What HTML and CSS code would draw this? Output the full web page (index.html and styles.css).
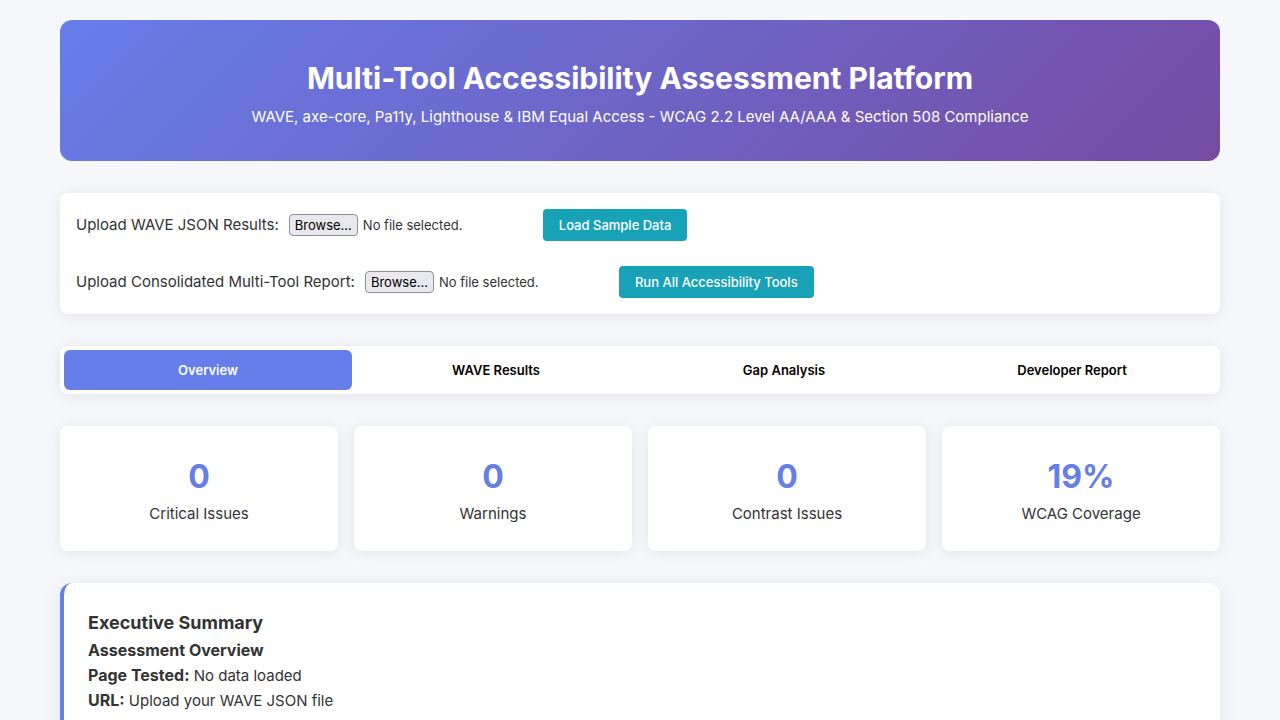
FILE: index.html
```html
<!DOCTYPE html>
<html lang="en">
<head>
<meta charset="utf-8">
<title>Multi-Tool Accessibility Assessment Platform</title>
<link rel="stylesheet" href="styles.css">
</head>
<body>
<div class="container">
  <header class="header">
    <h1 class="title">Multi-Tool Accessibility Assessment Platform</h1>
    <p class="subtitle">WAVE, axe-core, Pa11y, Lighthouse &amp; IBM Equal Access - WCAG 2.2 Level AA/AAA &amp; Section 508 Compliance</p>
  </header>

  <section class="controls">
    <div class="control-row">
      <label class="control-label" for="wave-file">Upload WAVE JSON Results:</label>
      <div class="file-field">
        <input type="file" id="wave-file" class="file-input">
        <label class="browse" for="wave-file">Browse…</label>
        <span class="file-name">No file selected.</span>
      </div>
      <button type="button" class="btn">Load Sample Data</button>
    </div>
    <div class="control-row">
      <label class="control-label" for="report-file">Upload Consolidated Multi-Tool Report:</label>
      <div class="file-field">
        <input type="file" id="report-file" class="file-input">
        <label class="browse" for="report-file">Browse…</label>
        <span class="file-name">No file selected.</span>
      </div>
      <button type="button" class="btn">Run All Accessibility Tools</button>
    </div>
  </section>

  <nav class="tabs">
    <button type="button" class="tab active">Overview</button>
    <button type="button" class="tab">WAVE Results</button>
    <button type="button" class="tab">Gap Analysis</button>
    <button type="button" class="tab">Developer Report</button>
  </nav>

  <section class="stats">
    <div class="stat"><div class="stat-number">0</div><div>Critical Issues</div></div>
    <div class="stat"><div class="stat-number">0</div><div>Warnings</div></div>
    <div class="stat"><div class="stat-number">0</div><div>Contrast Issues</div></div>
    <div class="stat"><div class="stat-number">19%</div><div>WCAG Coverage</div></div>
  </section>

  <section class="summary">
    <h2 class="summary-title">Executive Summary</h2>
    <h3 class="summary-subtitle">Assessment Overview</h3>
    <p class="summary-line"><strong>Page Tested:</strong> No data loaded</p>
    <p class="summary-line"><strong>URL:</strong> Upload your WAVE JSON file</p>
  </section>
</div>
</body>
</html>
```

FILE: styles.css
```css
* {
  margin: 0;
  padding: 0;
  box-sizing: border-box;
}

body {
  font-family: Inter, "Liberation Sans", sans-serif;
  font-size: 15px;
  line-height: 26px;
  color: #333;
  background: #f5f7fa;
}

.container {
  max-width: 1200px;
  margin: 0 auto;
  padding: 20px;
}

.header {
  margin-bottom: 32px;
  padding: 32px;
  color: #fff;
  text-align: center;
  background: linear-gradient(135deg, #667eea 0%, #764ba2 100%);
  border-radius: 12px;
}

.title {
  font-size: 30px;
  line-height: 52px;
}

.subtitle {
  line-height: 25px;
}

.controls {
  display: flex;
  flex-direction: column;
  gap: 25px;
  margin-bottom: 32px;
  padding: 16px;
  background: #fff;
  border-radius: 8px;
  box-shadow: 0 2px 15px rgba(0, 0, 0, 0.08);
}

.control-row {
  display: flex;
  align-items: center;
  gap: 10px;
}

.file-field {
  position: relative;
  display: flex;
  align-items: center;
  gap: 5px;
  width: 244px;
}

.file-input {
  position: absolute;
  inset: 0;
  width: 100%;
  opacity: 0;
}

.browse {
  padding: 0 5px;
  font-size: 13px;
  line-height: 20px;
  color: #000;
  background: #e9e9ed;
  border: 1px solid #8f8f9d;
  border-radius: 4px;
}

.file-name {
  font-size: 13px;
}

.btn {
  height: 32px;
  padding: 0 16px;
  font: 500 13px/16px Inter, "Liberation Sans", sans-serif;
  color: #fff;
  background: #17a2b8;
  border: 0;
  border-radius: 4px;
}

.tabs {
  display: flex;
  margin-bottom: 32px;
  padding: 4px;
  background: #fff;
  border-radius: 8px;
  box-shadow: 0 2px 15px rgba(0, 0, 0, 0.08);
}

.tab {
  flex: 1;
  height: 40px;
  font: 600 13px/16px Inter, "Liberation Sans", sans-serif;
  color: #000;
  background: transparent;
  border: 0;
  border-radius: 6px;
}

.tab.active {
  color: #fff;
  background: #667eea;
}

.stats {
  display: grid;
  grid-template-columns: repeat(4, 1fr);
  gap: 16px;
  margin-bottom: 32px;
}

.stat {
  padding: 24px;
  text-align: center;
  background: #fff;
  border-radius: 8px;
  box-shadow: 0 2px 15px rgba(0, 0, 0, 0.08);
}

.stat-number {
  padding-top: 2px;
  font-size: 32px;
  font-weight: 700;
  line-height: 49px;
  color: #667eea;
}

.summary {
  padding: 24px;
  background: #fff;
  border-left: 4px solid #667eea;
  border-radius: 12px;
  box-shadow: 0 4px 20px rgba(0, 0, 0, 0.08);
}

.summary-title {
  padding-top: 2px;
  font-size: 18px;
  line-height: 28px;
}

.summary-subtitle,
.summary-line strong {
  font-size: 16px;
}

.summary-line {
  line-height: 25px;
}
```
